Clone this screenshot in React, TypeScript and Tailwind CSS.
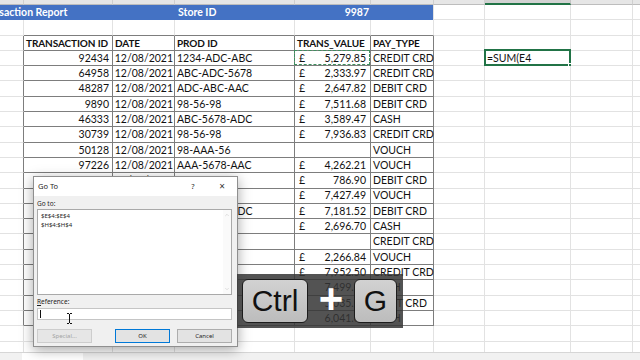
import { ChevronUp, ChevronDown } from 'lucide-react';

// column widths A..J, as they sit in the frame
const COLS = [24, 89, 62, 120, 76, 63, 51, 86, 62, 80];
const LETTERS = ['A', 'B', 'C', 'D', 'E', 'F', 'G', 'H', 'I', 'J'];

type Row = [string, string, string, string, string];

const DATA: Row[] = [
  ['92434', '12/08/2021', '1234-ADC-ABC', '5,279.85', 'CREDIT CRD'],
  ['64958', '12/08/2021', 'ABC-ADC-5678', '2,333.97', 'CREDIT CRD'],
  ['48287', '12/08/2021', 'ADC-ABC-AAC', '2,647.82', 'DEBIT CRD'],
  ['9890', '12/08/2021', '98-56-98', '7,511.68', 'DEBIT CRD'],
  ['46333', '12/08/2021', 'ABC-5678-ADC', '3,589.47', 'CASH'],
  ['30739', '12/08/2021', '98-56-98', '7,936.83', 'CREDIT CRD'],
  ['50128', '12/08/2021', '98-AAA-56', '', 'VOUCH'],
  ['97226', '12/08/2021', 'AAA-5678-AAC', '4,262.21', 'VOUCH'],
  ['35871', '12/08/2021', '98-56-98', '786.90', 'DEBIT CRD'],
  ['81340', '12/08/2021', 'ADC-AAA', '7,427.49', 'VOUCH'],
  ['26519', '12/08/2021', 'AAA-5678-ADC', '7,181.52', 'DEBIT CRD'],
  ['70482', '12/08/2021', '98-56-98', '2,696.70', 'CASH'],
  ['13957', '12/08/2021', '98-AAA-56', '', 'CREDIT CRD'],
  ['64120', '12/08/2021', 'ABC-ADC', '2,266.84', 'VOUCH'],
  ['58803', '12/08/2021', '98-56-98', '7,952.50', 'CREDIT CRD'],
  ['42716', '12/08/2021', 'ADC-ABC', '7,499.15', 'CASH'],
  ['90265', '12/08/2021', '98-AAA-56', '5,035.71', 'DEBIT CRD'],
  ['37194', '12/08/2021', '98-56-98', '6,041.88', 'CASH'],
];

const HEADERS = ['TRANSACTION ID', 'DATE', 'PROD ID', 'TRANS_VALUE', 'PAY_TYPE'];

const ColumnStrip = () => (
  <div className="flex h-[20px] -mt-[15px] bg-[#e6e6e6]">
    {COLS.map((w, c) => (
      <div
        key={c}
        style={{ width: w }}
        className={
          c === 7
            ? 'shrink-0 h-full flex items-end justify-center pb-[2px] text-[10px] text-[#333] bg-[#d2d2d2] border-r border-r-[#c4c4c4] border-b-2 border-b-[#217346]'
            : 'shrink-0 h-full flex items-end justify-center pb-[2px] text-[10px] text-[#555] border-r border-r-[#cfcfcf] border-b border-b-[#bdbdbd]'
        }
      >
        {LETTERS[c]}
      </div>
    ))}
  </div>
);

const BlueRow = () => (
  <div className="flex h-[15.3px]">
    <div className="w-[434px] shrink-0 h-full bg-[#4472c4] flex items-center overflow-hidden text-white font-bold text-[10.5px] border-r border-r-[#e2e2e2]">
      <span className="w-[196px] shrink-0 -ml-[21px] whitespace-nowrap">Transaction Report</span>
      <span className="w-[120px] shrink-0 pl-[3px] whitespace-nowrap">Store ID</span>
      <span className="w-[76px] shrink-0 text-right pr-[2px]">9987</span>
    </div>
    {COLS.slice(6).map((w, i) => (
      <div key={i} style={{ width: w }} className="shrink-0 h-full border-r border-b border-r-[#e2e2e2] border-b-[#e2e2e2]" />
    ))}
  </div>
);

const SheetRow = ({ r }: { r: number }) => {
  const inTable = r >= 2 && r <= 20;
  const header = r === 2;
  const d = r >= 3 && r <= 20 ? DATA[r - 3] : null;

  return (
    <div className="flex h-[15.3px]">
      {COLS.map((w, c) => {
        const tableCol = c >= 1 && c <= 5;
        const darkR = inTable && c <= 5;
        const darkB = (inTable || r === 1) && tableCol;
        const rCls = darkR ? 'border-r-[#7d7d7d]' : 'border-r-[#e2e2e2]';
        const bCls = darkB ? 'border-b-[#7d7d7d]' : 'border-b-[#e2e2e2]';
        let content: React.ReactNode = null;
        let align = 'justify-start pl-[2px]';

        if (header && tableCol) {
          content = <span className="font-bold text-[10px] tracking-[-0.1px]">{HEADERS[c - 1]}</span>;
        } else if (d && tableCol) {
          if (c === 1) { content = d[0]; align = 'justify-end pr-[3px]'; }
          if (c === 2) { content = d[1]; align = 'justify-end pr-[1px]'; }
          if (c === 3) content = d[2];
          if (c === 4 && d[3]) {
            content = (
              <>
                <span className="pl-[2px]">£</span>
                <span className="ml-auto pr-[4px]">{d[3]}</span>
              </>
            );
          }
          if (c === 5) content = d[4];
        } else if (r === 3 && c === 7) {
          content = '=SUM(E4';
        }

        return (
          <div
            key={c}
            style={{ width: w }}
            className={`relative shrink-0 h-full flex items-center whitespace-nowrap overflow-visible text-[10.5px] leading-none text-[#111] border-r border-b ${rCls} ${bCls} ${align}`}
          >
            {content}
            {r === 3 && c === 4 && (
              <div className="absolute -left-px -top-px right-0 bottom-0 border border-dashed border-[#3f8f5f]" />
            )}
            {r === 3 && c === 7 && (
              <div className="absolute -left-px -top-[1.5px] -right-[1px] -bottom-[1px] border-2 border-[#217346]">
                <div className="absolute -right-[3px] -bottom-[3px] w-[4px] h-[4px] bg-[#217346] border border-white" />
              </div>
            )}
          </div>
        );
      })}
    </div>
  );
};

const GoToDialog = () => (
  <div className="absolute left-[33px] top-[176px] w-[205px] h-[171px] flex flex-col border border-[#8f8f8f] bg-[#f0f0f0] shadow-[0_3px_12px_rgba(0,0,0,0.35)] font-['Noto_Sans',sans-serif] text-[#1e1e1e]">
    <div className="h-[19px] shrink-0 bg-white flex items-center pl-[4px] text-[7.5px]">
      <span className="flex-1">Go To</span>
      <span className="w-[14px] text-center">?</span>
      <span className="w-[14px] text-center ml-[15px] mr-[8px] text-[10px] text-[#333]">×</span>
    </div>
    <div className="flex flex-col flex-1 pl-[3px] pr-[5px]">
      <div className="h-[13px] flex items-center text-[6.5px] pt-[2px]">Go to:</div>
      <div className="h-[86px] bg-white border border-[#a9a9a9] flex">
        <div className="flex-1 pl-[3px] pt-[2px] text-[6px] leading-[9px]">
          <div>$E$4:$E$4</div>
          <div>$H$4:$H$4</div>
        </div>
        <div className="w-[8px] flex flex-col justify-between items-center py-[2px] bg-[#fafafa]">
          <ChevronUp size={6} color="#c2c2c2" strokeWidth={2} />
          <ChevronDown size={6} color="#c2c2c2" strokeWidth={2} />
        </div>
      </div>
      <div className="h-[13px] flex items-center text-[6.5px] pt-[1px]">
        <span className="underline">R</span>eference:
      </div>
      <div className="h-[12px] bg-white border border-[#c5c5c5] flex items-center pl-[2px]">
        <div className="w-px h-[8px] bg-[#111]" />
      </div>
      <div className="flex mt-[9px] h-[14px] text-[6px]">
        <div className="w-[55px] flex items-center justify-center bg-[#e6e6e6] border border-[#cdcdcd] text-[#a3a3a3]">Special...</div>
        <div className="w-[55px] ml-[23px] flex items-center justify-center bg-[#e3e3e3] border border-[#0078d7]">OK</div>
        <div className="w-[55px] ml-[7px] flex items-center justify-center bg-[#e3e3e3] border border-[#adadad]">Cancel</div>
      </div>
    </div>
  </div>
);

const KeyOverlay = () => (
  <div className="absolute left-[237px] top-[274px] w-[166px] h-[54px] bg-[#353535]/85 flex items-center pl-[5px] font-['Liberation_Sans',Arial,sans-serif]">
    <div className="w-[66px] h-[44px] rounded-[6px] border-[1.5px] border-[#1c1c1c] bg-gradient-to-b from-[#d2d2d2] to-[#bcbcbc] flex items-center justify-center text-[30px] leading-none text-[#111]">
      Ctrl
    </div>
    <div className="w-[46px] flex items-center justify-center text-white text-[42px] font-bold leading-none pb-[4px]">+</div>
    <div className="w-[43px] h-[44px] rounded-[6px] border-[1.5px] border-[#1c1c1c] bg-gradient-to-b from-[#d2d2d2] to-[#bcbcbc] flex items-center justify-center text-[30px] leading-none text-[#111]">
      G
    </div>
  </div>
);

const IBeam = () => (
  <svg className="absolute left-[66px] top-[313px]" width="7" height="11" viewBox="0 0 7 11">
    <path d="M1 0.5h2M4 0.5h2M3.5 1v9M1 10.5h2M4 10.5h2" stroke="#111" strokeWidth="1" fill="none" />
  </svg>
);

export default function App() {
  const rows = Array.from({ length: 24 }, (_, i) => i);
  return (
    <div className="relative w-[640px] h-[360px] overflow-hidden bg-white flex flex-col font-['Lato',sans-serif]">
      <div className="h-[352px] shrink-0 overflow-hidden">
        <ColumnStrip />
        <BlueRow />
        {rows.slice(1).map((r) => (
          <SheetRow key={r} r={r} />
        ))}
      </div>
      <div className="h-[20px] shrink-0 bg-[#f1f1f1] border-t border-[#d6d6d6] flex">
        <div className="w-[22px]" />
        <div className="w-[61px] bg-white pl-[6px] pt-[3px] text-[10px] font-bold text-[#217346]">Sheet1</div>
      </div>
      <GoToDialog />
      <KeyOverlay />
      <IBeam />
    </div>
  );
}
